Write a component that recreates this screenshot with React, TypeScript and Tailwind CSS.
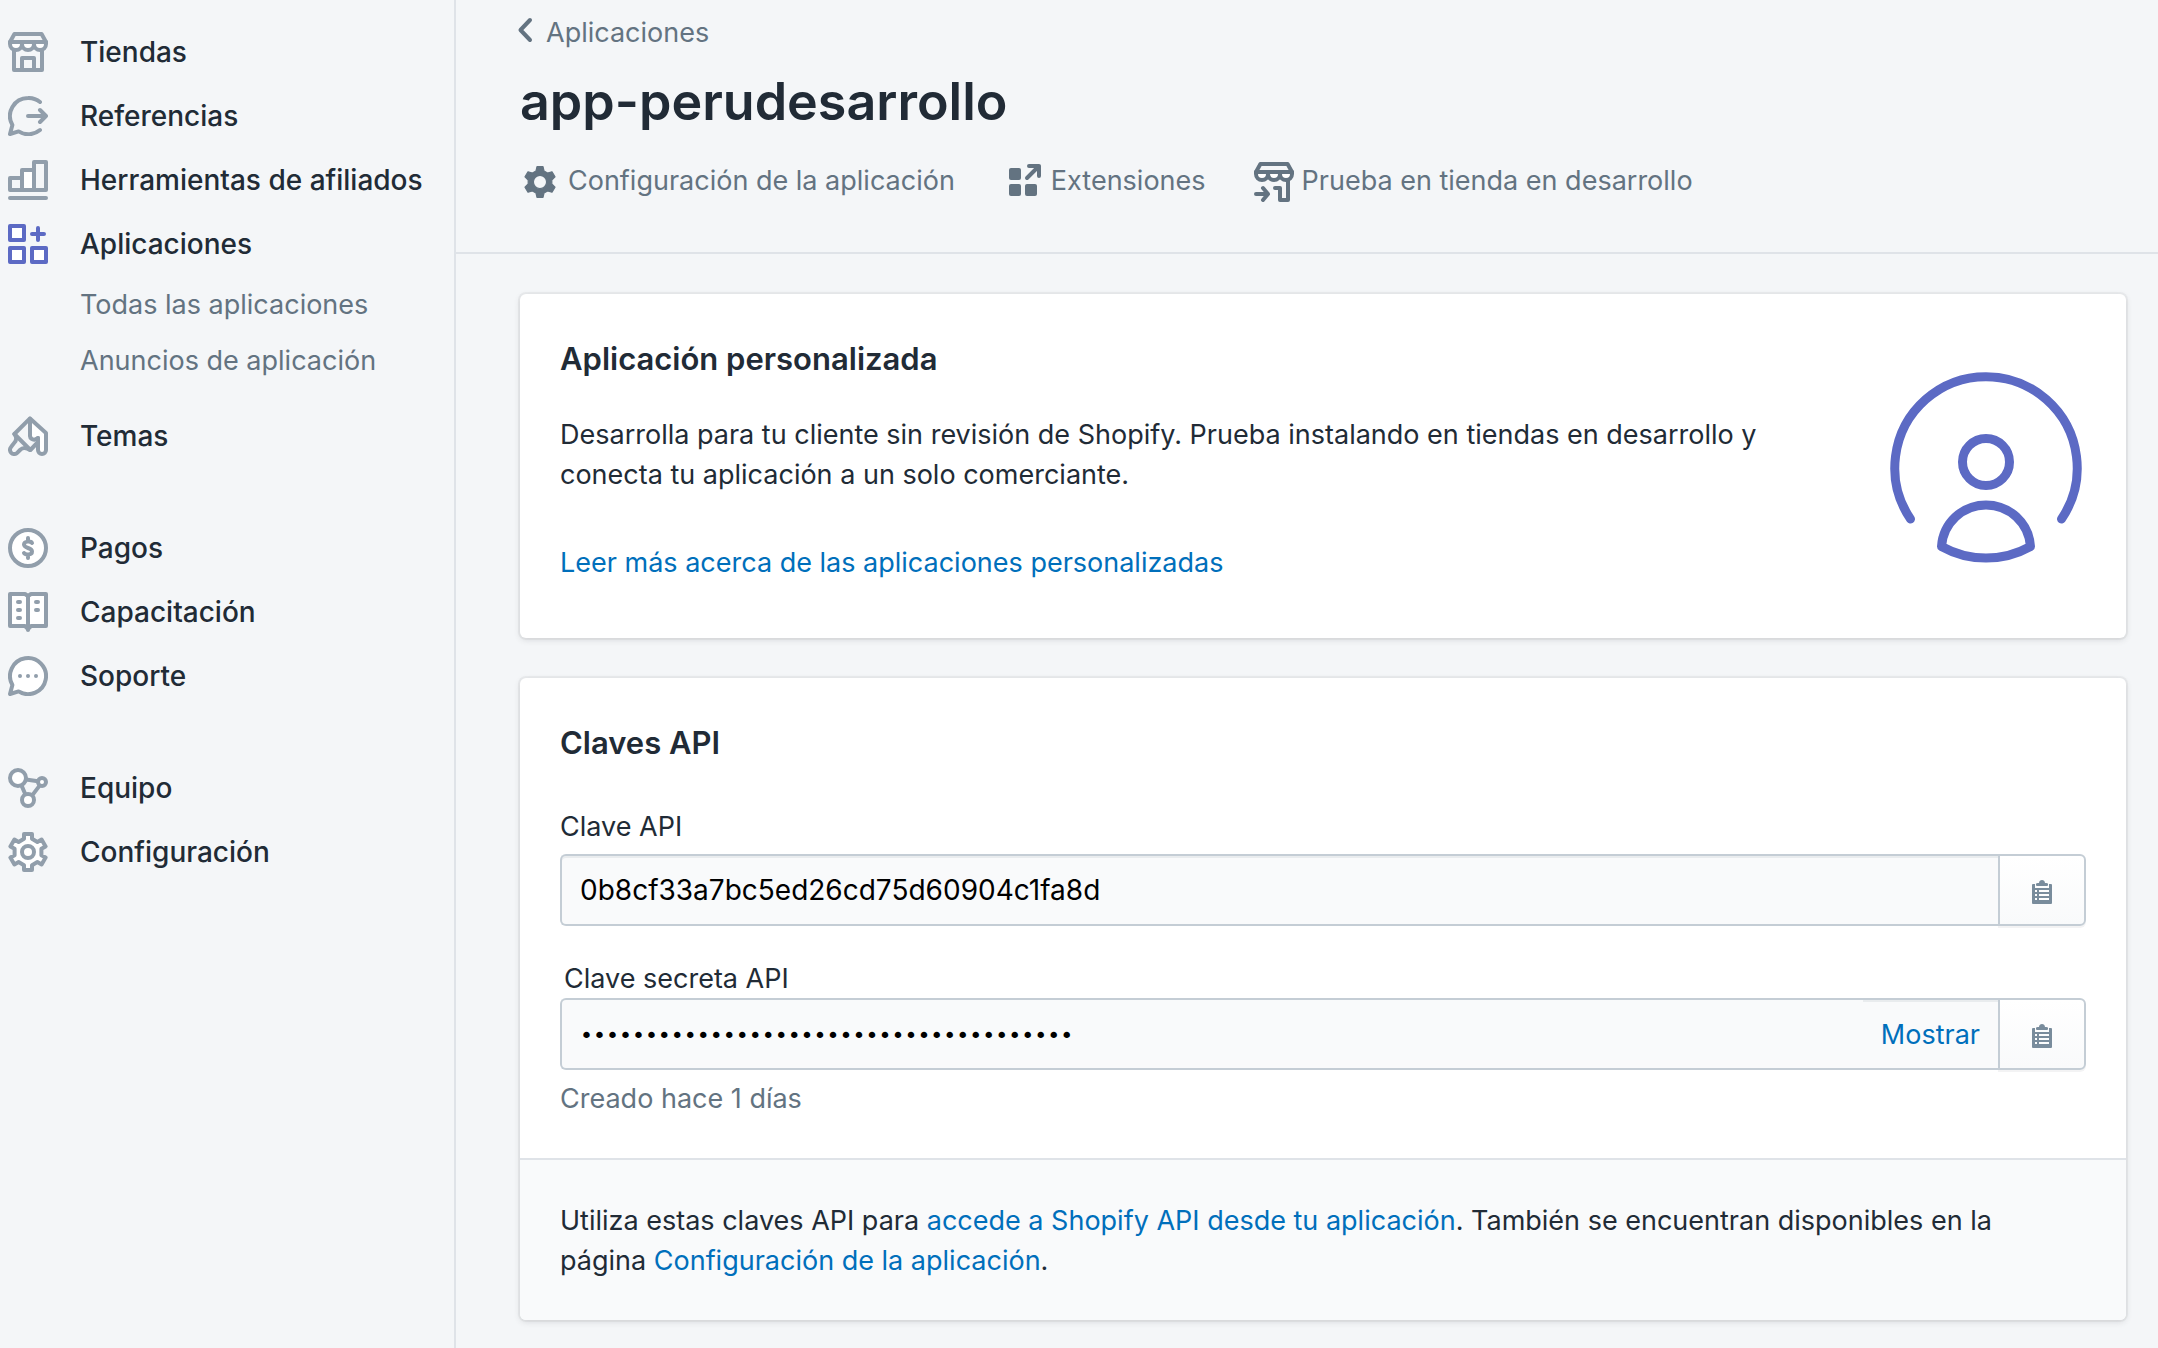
import type { ReactNode } from "react";

type IconProps = { children: ReactNode; className?: string };

function Icon({ children, className = "text-[#919eab]" }: IconProps) {
  return (
    <svg
      viewBox="0 0 20 20"
      className={`size-10 shrink-0 ${className}`}
      fill="none"
      stroke="currentColor"
      strokeWidth="2"
      strokeLinecap="round"
      strokeLinejoin="round"
      aria-hidden="true"
    >
      {children}
    </svg>
  );
}

const StoreIcon = () => (
  <Icon>
    <path d="M3 8v11h14V8" />
    <path d="M7 19v-6h6v6" />
    <path fill="#fff" d="M1 5v1a3 3 0 0 0 6 0 3 3 0 0 0 6 0 3 3 0 0 0 6 0V5z" />
    <path d="M3.2 1h13.6L19 5H1z" />
  </Icon>
);

const ReferralIcon = () => (
  <Icon>
    <path d="M16 3A9.2 9.2 0 0 0 10 1a9 9 0 0 0-7.8 13.5L1 19l4.3-1.3A9 9 0 0 0 16 17" />
    <path d="M10 10h9M16 7l3 3-3 3" />
  </Icon>
);

const ChartIcon = () => (
  <Icon>
    <path fill="#fff" stroke="none" d="M7 5h6v10H7z" />
    <path d="M1 15V9h6v6zM7 15V5h6v10zM13 15V1h6v14zM1 19h18" />
  </Icon>
);

const AppsIcon = () => (
  <Icon className="text-[#5c6ac4]">
    <path fill="#fff" d="M1 1h7v7H1zM1 12h7v7H1zM12 12h7v7h-7z" />
    <path d="M15 2v6M12 5h6" />
  </Icon>
);

const ThemesIcon = () => (
  <Icon>
    <path fill="#fff" stroke="none" d="M11 1.2l8 7.3V17a2 2 0 0 1-4 0v-6l-4-1z" />
    <path d="M3.2 9L11 1.2l8 7.3V17a2 2 0 0 1-4 0v-6" />
    <path d="M11 1.5V10a2 2 0 0 0 2.5 1.8L15 11" />
    <path d="M3.2 9l8 8L15 13" />
    <path d="M3.5 9.5c1 1.5.6 3-.6 4.2L1.6 15.4a2.1 2.1 0 0 0 3 3L6 17c1.2-1.2 3-1.3 5 0" />
  </Icon>
);

const PaymentsIcon = () => (
  <Icon>
    <circle cx="10" cy="10" r="9" fill="#fff" />
    <path d="M12 7.5C11.5 6.6 8 6.3 8 8.3 8 10.3 12 9.7 12 11.7s-3.5 1.7-4 .8M10 5v1M10 14v1" />
  </Icon>
);

const BookIcon = () => (
  <Icon>
    <path fill="#fff" d="M1 1h7.5L10 2l1.5-1H19v16h-7.5L10 18.5 8.5 17H1z" />
    <path d="M10 2v17M5 5h1M5 9h1M5 13h1M14 5h1M14 9h1" />
  </Icon>
);

const ChatIcon = () => (
  <Icon>
    <path fill="#fff" d="M2.2 14.5A9 9 0 1 1 5.3 17.7L1 19z" />
    <g fill="currentColor" stroke="none">
      <circle cx="6" cy="10" r="1" />
      <circle cx="10" cy="10" r="1" />
      <circle cx="14" cy="10" r="1" />
    </g>
  </Icon>
);

const TeamIcon = () => (
  <Icon>
    <path d="M9 5.8l6 .8M6.8 8.8l1.8 4.2M15.8 8.8L12 13.8" />
    <g fill="#fff">
      <circle cx="5" cy="5" r="4" />
      <circle cx="17" cy="7" r="2" />
      <circle cx="10" cy="16" r="3" />
    </g>
  </Icon>
);

const SettingsIcon = () => (
  <Icon>
    <path
      fill="#fff"
      d="M8 3.4V1h4v2.4L14.7 5l2.1-1.2 2 3.4-2.1 1.2v3.2l2.1 1.2-2 3.4-2.1-1.2-2.7 1.6V19H8v-2.4L5.3 15l-2.1 1.2-2-3.4 2.1-1.2V8.4L1.2 7.2l2-3.4L5.3 5z"
    />
    <circle cx="10" cy="10" r="3" />
  </Icon>
);

const GearIcon = () => (
  <Icon className="text-[#637381]">
    <path
      fill="currentColor"
      fillRule="evenodd"
      strokeWidth=".6"
      d="M8 4.5L8.5 2.3h3l.5 2.2 1.8 1 2.2-.6 1.5 2.5-1.6 1.6v2l1.6 1.6-1.5 2.5-2.2-.6-1.8 1-.5 2.2h-3L8 15.5l-1.8-1-2.2.6-1.5-2.5L4.1 11V9L2.5 7.4 4 4.9l2.2.6zM10 6.7a3.3 3.3 0 1 0 0 6.6 3.3 3.3 0 0 0 0-6.6z"
    />
  </Icon>
);

const ExtensionsIcon = () => (
  <Icon className="text-[#637381]">
    <g fill="currentColor" stroke="none">
      <rect x="3" y="3" width="6" height="6" rx="1" />
      <rect x="3" y="11" width="6" height="6" rx="1" />
      <rect x="11" y="11" width="6" height="6" rx="1" />
    </g>
    <path d="M13 2h5v5M18 2l-6 6" />
  </Icon>
);

const TestStoreIcon = () => (
  <Icon className="text-[#637381]">
    <path d="M17 8v11h-4v-6h-2.5" />
    <path fill="#fff" d="M1 5v1a3 3 0 0 0 6 0 3 3 0 0 0 6 0 3 3 0 0 0 6 0V5z" />
    <path d="M3.2 1h13.6L19 5H1z" />
    <path d="M1 16h6M4.5 13L7 16l-2.5 3" />
  </Icon>
);

function ClipboardIcon() {
  return (
    <svg viewBox="0 0 40 40" className="size-10 text-[#798c9c]" fill="currentColor" aria-hidden="true">
      <path
        fillRule="evenodd"
        d="M11 14h2v4h14v-4h2a1 1 0 0 1 1 1v18a1 1 0 0 1-1 1H11a1 1 0 0 1-1-1V15a1 1 0 0 1 1-1zM13 20v2h2v-2zM17 20v2h10v-2zM13 24v2h2v-2zM17 24v2h10v-2zM13 28v2h2v-2zM17 28v2h10v-2z"
      />
      <path d="M14 14c0-1 1-1 3-1 0-4 6-4 6 0 2 0 3 0 3 1v1a1 1 0 0 1-1 1H15a1 1 0 0 1-1-1z" />
    </svg>
  );
}

function CustomAppArt() {
  return (
    <svg
      viewBox="0 0 200 200"
      className="size-[200px] shrink-0 text-[#5c6ac4]"
      fill="none"
      stroke="currentColor"
      strokeWidth="9"
      strokeLinecap="round"
      strokeLinejoin="round"
      aria-hidden="true"
    >
      <path d="M24.500 152A91.200 91.200 0 1 1 175.500 152" />
      <circle cx="100" cy="95" r="23.500" />
      <path d="M55.500 179.500a44.600 44.600 0 0 1 89 0 91.200 91.200 0 0 1-89 0z" />
    </svg>
  );
}

function NavItem({ icon, label }: { icon: ReactNode; label: string }) {
  return (
    <a href="#" className="flex items-center gap-8 text-[28px] leading-10 font-medium text-[#212b36]">
      {icon}
      {label}
    </a>
  );
}

function NavGroup({ children }: { children: ReactNode }) {
  return <div className="flex flex-col gap-6">{children}</div>;
}

function Sidebar() {
  return (
    <nav className="flex w-[456px] shrink-0 flex-col gap-18 border-r-2 border-[#dfe3e8] py-8 pl-2">
      <NavGroup>
        <NavItem icon={<StoreIcon />} label="Tiendas" />
        <NavItem icon={<ReferralIcon />} label="Referencias" />
        <NavItem icon={<ChartIcon />} label="Herramientas de afiliados" />
        <NavItem icon={<AppsIcon />} label="Aplicaciones" />
        <div className="-mt-[3px] mb-[11px] flex flex-col gap-4 pl-18 text-[#637381]">
          <a href="#">Todas las aplicaciones</a>
          <a href="#">Anuncios de aplicación</a>
        </div>
        <NavItem icon={<ThemesIcon />} label="Temas" />
      </NavGroup>
      <NavGroup>
        <NavItem icon={<PaymentsIcon />} label="Pagos" />
        <NavItem icon={<BookIcon />} label="Capacitación" />
        <NavItem icon={<ChatIcon />} label="Soporte" />
      </NavGroup>
      <NavGroup>
        <NavItem icon={<TeamIcon />} label="Equipo" />
        <NavItem icon={<SettingsIcon />} label="Configuración" />
      </NavGroup>
    </nav>
  );
}

function HeaderAction({ icon, label }: { icon: ReactNode; label: string }) {
  return (
    <a href="#" className="flex gap-2 leading-[38px]">
      {icon}
      {label}
    </a>
  );
}

function Header() {
  return (
    <header className="flex flex-col border-b-2 border-[#dfe3e8] px-16 pt-[13px] pb-[50px] text-[#637381]">
      <a href="#" className="flex gap-2.5">
        <svg
          viewBox="0 0 16 40"
          className="h-10 w-4 overflow-visible text-[#637381]"
          fill="none"
          stroke="currentColor"
          strokeWidth="4"
          strokeLinecap="round"
          strokeLinejoin="round"
          aria-hidden="true"
        >
          <path d="M10 7L0.500 17 10 27" />
        </svg>
        Aplicaciones
      </a>
      <h1 className="mt-[17px] text-[52px] leading-16 font-semibold text-[#212b36]">app-perudesarrollo</h1>
      <div className="mt-7 flex gap-12">
        <HeaderAction icon={<GearIcon />} label="Configuración de la aplicación" />
        <HeaderAction icon={<ExtensionsIcon />} label="Extensiones" />
        <HeaderAction icon={<TestStoreIcon />} label="Prueba en tienda en desarrollo" />
      </div>
    </header>
  );
}

const cardClass =
  "overflow-hidden rounded-md bg-white shadow-[0_0_0_2px_rgba(63,63,68,0.05),0_2px_6px_rgba(63,63,68,0.15)]";

function CardHeading({ children }: { children: ReactNode }) {
  return <h2 className="text-[31px] leading-[50px] font-semibold">{children}</h2>;
}

function CustomAppCard() {
  return (
    <section className={`${cardClass} flex items-center gap-10 px-10 pt-10 pb-[55px]`}>
      <div className="flex-1">
        <CardHeading>Aplicación personalizada</CardHeading>
        <p className="mt-[31px]">
          Desarrolla para tu cliente sin revisión de Shopify. Prueba instalando en tiendas en desarrollo y conecta tu
          aplicación a un solo comerciante.
        </p>
        <a href="#" className="mt-12 block text-[#006fbb]">
          Leer más acerca de las aplicaciones personalizadas
        </a>
      </div>
      <div className="-mb-4">
        <CustomAppArt />
      </div>
    </section>
  );
}

function CopyButton({ label }: { label: string }) {
  return (
    <button
      type="button"
      aria-label={label}
      className="flex w-22 items-center justify-center rounded-r-md border-2 border-[#c4cdd5] bg-linear-to-b from-white to-[#f9fafb] shadow-[0_2px_0_rgba(22,29,37,0.05)]"
    >
      <ClipboardIcon />
    </button>
  );
}

function KeysCard() {
  return (
    <section className={cardClass}>
      <div className="p-10">
        <CardHeading>Claves API</CardHeading>
        <label htmlFor="api-key" className="mt-10 block leading-[38px]">
          Clave API
        </label>
        <div className="mt-2 flex h-18">
          <input
            id="api-key"
            readOnly
            value="0b8cf33a7bc5ed26cd75d60904c1fa8d"
            className="min-w-0 flex-1 rounded-l-md border-2 border-r-0 border-[#c4cdd5] bg-[#f9fafb] px-[18px] text-[28px] text-black shadow-[inset_0_2px_0_rgba(99,115,129,0.1)]"
          />
          <CopyButton label="Copiar clave API" />
        </div>
        <label htmlFor="api-secret" className="mt-[34px] block pl-1 leading-[38px]">
          Clave secreta API
        </label>
        <div className="flex h-18">
          <div className="flex min-w-0 flex-1 rounded-l-md border-2 border-r-0 border-[#c4cdd5] bg-[#f9fafb]">
            <input
              id="api-secret"
              type="password"
              readOnly
              value="shpss_00000000000000000000000000000000"
              className="min-w-0 flex-1 bg-transparent pt-1 pl-[18px] font-['DejaVu_Sans',sans-serif] text-[22px] text-black"
            />
            <button
              type="button"
              className="px-[18px] pt-0.5 text-[#006fbb] shadow-[inset_0_2px_0_rgba(99,115,129,0.1)]"
            >
              Mostrar
            </button>
          </div>
          <CopyButton label="Copiar clave secreta API" />
        </div>
        <p className="mt-2.5 leading-[38px] text-[#637381]">Creado hace 1 días</p>
      </div>
      <p className="border-t-2 border-[#dfe3e8] bg-[#f9fafb] pt-[41px] pr-16 pb-[39px] pl-10">
        Utiliza estas claves API para{" "}
        <a href="#" className="text-[#006fbb]">
          accede a Shopify API desde tu aplicación
        </a>
        . También se encuentran disponibles en la página{" "}
        <a href="#" className="text-[#006fbb]">
          Configuración de la aplicación
        </a>
        .
      </p>
    </section>
  );
}

export default function App() {
  return (
    <div className="flex min-h-screen bg-[#f4f6f8] font-[Inter,sans-serif] text-[27px] leading-10 text-[#212b36]">
      <Sidebar />
      <main className="min-w-0 flex-1">
        <Header />
        <div className="flex flex-col gap-10 pt-10 pr-8 pb-7 pl-16">
          <CustomAppCard />
          <KeysCard />
        </div>
      </main>
    </div>
  );
}
